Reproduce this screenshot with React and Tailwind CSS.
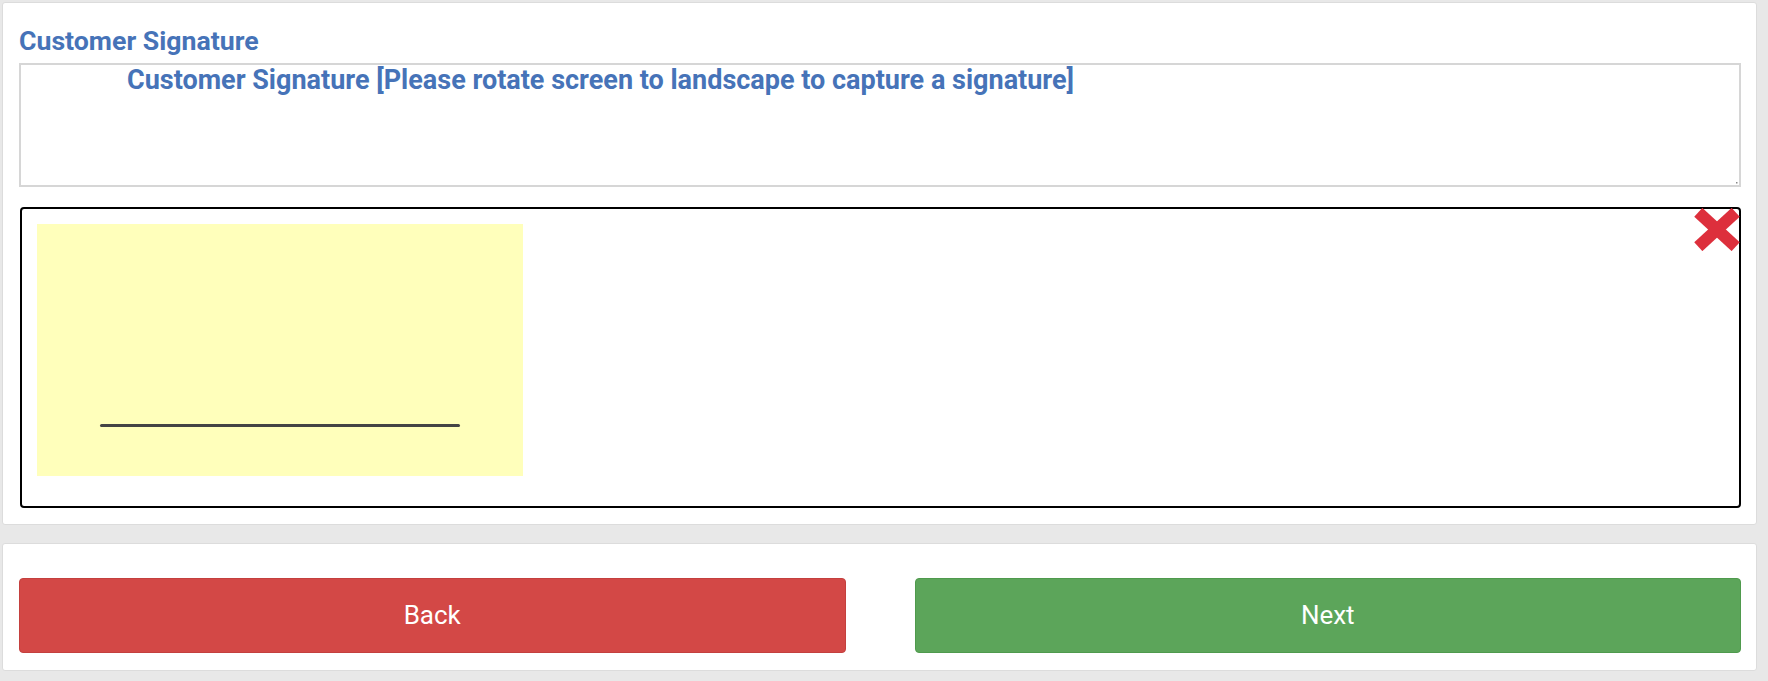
import React from "react";

export default function App() {
  return (
    <div
      className="min-h-[681px] w-full bg-[#e8e8e8] pt-[2px] pb-[11px]"
      style={{ fontFamily: "Roboto, 'Liberation Sans', sans-serif" }}
    >
      {/* Card 1 */}
      <div className="ml-[2px] mr-[11px] rounded-[3px] border border-[#dcdcdc] bg-white pt-[22px] pb-[16px] pl-[16px] pr-[15px]">
        <div className="text-[26.7px] leading-[32px] font-bold text-[#4673b8]">
          Customer Signature
        </div>
        <div className="relative mt-[6px] h-[124px] border-2 border-[#d6d6d6] bg-white pl-[106px]">
          <div className="text-[27px] leading-[30px] font-bold text-[#4673b8]">
            Customer Signature [Please rotate screen to landscape to capture a signature]
          </div>
          <svg
            className="absolute right-[1px] bottom-[1px]"
            width="4"
            height="4"
            viewBox="0 0 4 4"
          >
            <rect x="2" y="2" width="1.5" height="1.5" fill="#888" />
          </svg>
        </div>
        <div className="relative mt-[20px] ml-[1px] h-[301px] rounded-[4px] border-2 border-black bg-white p-[15px]">
          <div className="relative h-[252px] w-[486px] bg-[#ffffbb]">
            <div className="absolute left-[63px] top-[200px] h-[3px] w-[360px] rounded-full bg-[#444444]" />
          </div>
          <svg
            className="absolute right-[-1px] top-[-1px]"
            width="46"
            height="43"
            viewBox="0 0 46 43"
          >
            <line x1="4.3" y1="4.3" x2="41.7" y2="38.7" stroke="#dd2f3c" strokeWidth="12" />
            <line x1="41.7" y1="4.3" x2="4.3" y2="38.7" stroke="#dd2f3c" strokeWidth="12" />
          </svg>
        </div>
      </div>

      {/* Card 2 */}
      <div className="mt-[18px] ml-[2px] mr-[11px] rounded-[3px] border border-[#dcdcdc] bg-white pt-[34px] pb-[17px] pl-[16px] pr-[15px]">
        <div className="grid grid-cols-2 gap-[69px]">
          <button className="flex h-[75px] items-center justify-center rounded-[4px] border border-[#c4403e] bg-[#d34846] text-[26px] text-white">
            Back
          </button>
          <button className="flex h-[75px] items-center justify-center rounded-[4px] border border-[#4f9a4d] bg-[#5ca55a] text-[26px] text-white">
            Next
          </button>
        </div>
      </div>
    </div>
  );
}
